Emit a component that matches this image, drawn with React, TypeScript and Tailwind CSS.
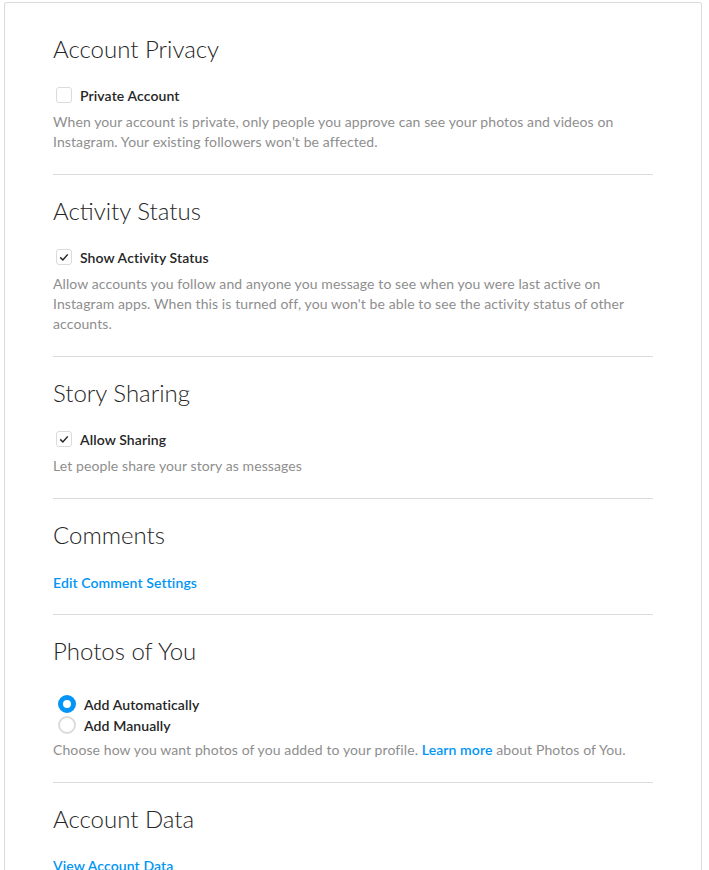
import React from 'react';

const font = { fontFamily: 'Lato, "Liberation Sans", sans-serif' };

const Heading: React.FC<{ children: React.ReactNode }> = ({ children }) => (
    <h2 className="text-[24px] leading-[30px] font-light text-[#262626]">{children}</h2>
);

const Checkbox: React.FC<{ checked?: boolean; label: string }> = ({ checked, label }) => (
    <label className="mt-[21px] flex h-5 items-center">
        <span className="ml-[3px] flex h-4 w-4 items-center justify-center rounded-[3px] border border-[#dbdbdb] bg-white">
            {checked && (
                <svg viewBox="0 0 16 16" className="h-[12px] w-[12px]">
                    <path d="M3 8.5 L6.5 12 L13 4.5" fill="none" stroke="#262626" strokeWidth="2" />
                </svg>
            )}
        </span>
        <span className="ml-[8px] text-[14px] font-semibold tracking-[0.1px] text-[#262626]">{label}</span>
    </label>
);

const Radio: React.FC<{ checked?: boolean; label: string }> = ({ checked, label }) => (
    <label className="flex h-5 items-center">
        <span
            className={
                checked
                    ? 'ml-[5px] h-[18px] w-[18px] rounded-full border-[5px] border-[#0095f6] bg-white'
                    : 'ml-[5px] h-[18px] w-[18px] rounded-full border-2 border-[#dbdbdb] bg-white'
            }
        />
        <span className="ml-[8px] text-[14px] font-semibold tracking-[0.1px] text-[#262626]">{label}</span>
    </label>
);

const Desc: React.FC<{ children: React.ReactNode; className?: string }> = ({ children, className }) => (
    <p className={`text-[14px] leading-5 tracking-[0.1px] text-[#8e8e8e] ${className ?? 'mt-[7px]'}`}>{children}</p>
);

const App: React.FC = () => {
    return (
        <div className="min-h-screen bg-white pl-[4px] pr-[7px] pt-[2px]" style={font}>
            <div className="rounded-t-[3px] border border-b-0 border-[#dbdbdb] bg-white px-[48px] pt-[10px]">
                <section className="border-b border-[#dbdbdb] pb-[22px] pt-[21px]">
                    <Heading>Account Privacy</Heading>
                    <Checkbox label="Private Account" />
                    <Desc>
                        When your account is private, only people you approve can see your photos and videos on
                        Instagram. Your existing followers won't be affected.
                    </Desc>
                </section>

                <section className="border-b border-[#dbdbdb] pb-[22px] pt-[21px]">
                    <Heading>Activity Status</Heading>
                    <Checkbox checked label="Show Activity Status" />
                    <Desc>
                        Allow accounts you follow and anyone you message to see when you were last active on
                        Instagram apps. When this is turned off, you won't be able to see the activity status of
                        other accounts.
                    </Desc>
                </section>

                <section className="border-b border-[#dbdbdb] pb-[22px] pt-[21px]">
                    <Heading>Story Sharing</Heading>
                    <Checkbox checked label="Allow Sharing" />
                    <Desc>Let people share your story as messages</Desc>
                </section>

                <section className="border-b border-[#dbdbdb] pb-[21px] pt-[21px]">
                    <Heading>Comments</Heading>
                    <a className="mt-[23px] block text-[14px] font-semibold leading-5 tracking-[0.1px] text-[#0095f6]">
                        Edit Comment Settings
                    </a>
                </section>

                <section className="border-b border-[#dbdbdb] pb-[22px] pt-[21px]">
                    <Heading>Photos of You</Heading>
                    <div className="mt-[28px] flex flex-col gap-px">
                        <Radio checked label="Add Automatically" />
                        <Radio label="Add Manually" />
                    </div>
                    <Desc className="mt-[5px]">
                        Choose how you want photos of you added to your profile.{' '}
                        <a className="font-semibold text-[#0095f6]">Learn more</a> about Photos of You.
                    </Desc>
                </section>

                <section className="pb-[22px] pt-[21px]">
                    <Heading>Account Data</Heading>
                    <a className="mt-[22px] block text-[14px] font-semibold leading-5 tracking-[0.1px] text-[#0095f6]">
                        View Account Data
                    </a>
                </section>
            </div>
        </div>
    );
};

export default App;
